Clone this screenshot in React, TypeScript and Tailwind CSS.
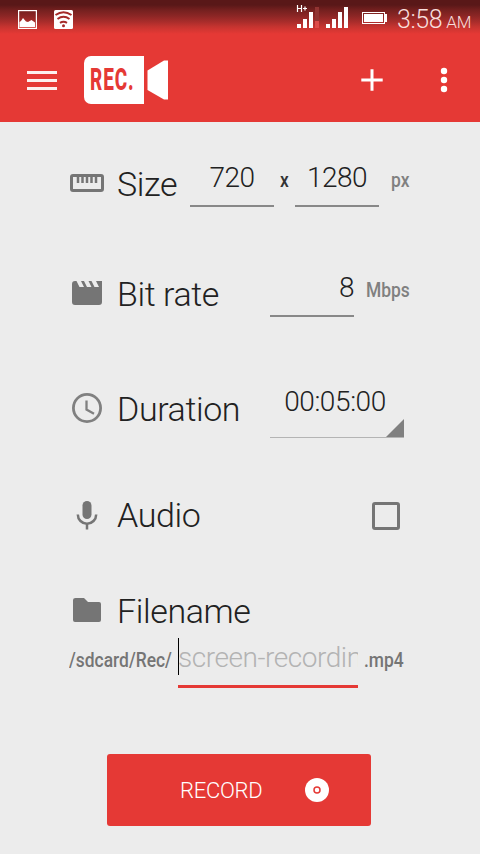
import { ReactNode } from 'react'

function Glyph({ children }: { children: ReactNode }) {
    return (
        <svg className="h-9 w-9 shrink-0" viewBox="0 0 36 36" fill="none">{children}</svg>
    )
}

function Label({ text, className = '' }: { text: string, className?: string }) {
    return <span className={`ml-3 whitespace-nowrap text-[34px] leading-9 font-light tracking-[-0.4px] text-[#212121] ${className}`}>{text}</span>
}

// Roboto squeezed horizontally, used for units and path fragments
function Unit({ text, className = '' }: { text: string, className?: string }) {
    return <span className={`inline-block origin-left scale-x-[0.83] whitespace-nowrap text-[21px] leading-6 font-medium ${className}`}>{text}</span>
}

function Field({ value, className = '' }: { value: string, className?: string }) {
    return (
        <div className={`h-12 w-[84px] border-b-2 border-[#888888] pt-[3px] text-[28px] leading-8 font-light tracking-[-0.5px] text-[#212121] ${className}`}>{value}</div>
    )
}

function StatusBar() {
    return (
        <div className="flex h-[38px] bg-[linear-gradient(180deg,#591818_0px,#591818_5px,#74201f_10px,#8c2625_16px,#aa2d2b_22px,#c73430_27px,#e53935_34px)]">
            <svg className="h-[38px] w-[90px]" viewBox="0 0 90 38">
                <rect x="18.6" y="10.6" width="17.8" height="17.8" fill="none" stroke="#fff" strokeWidth="1.2" />
                <path fill="#fff" d="M19.5 27v-5l1.500-1 2-3 3 3.500 2 .5 3.500-2 3.500 2.500v4.500z" />
                <rect x="54" y="10" width="19" height="19" rx="1.5" fill="#fff" />
                <g fill="none" stroke="#a52b29" strokeWidth="2">
                    <path d="M55.5 15Q63.5 9.500 71.5 15" />
                    <path d="M57.5 19Q63.5 14.500 69.5 19" />
                    <path d="M60 22.8Q63.5 20.500 67 22.800" />
                </g>
                <circle cx="63.5" cy="25.7" r="1.5" fill="#a52b29" />
            </svg>
            <svg className="ml-[200px] h-[38px] w-[105px]" viewBox="290 0 105 38">
                <path fill="none" stroke="#fff" strokeWidth="1.2" d="M297.5 5v7M301.500 5v7M297.500 8.500h4M303 8.500h4M305 6.500v4" />
                <path fill="#fff" d="M297 24h4v4h-4zM303 19h4v9h-4zM309 12h4v16h-4z" />
                <path fill="#913432" d="M315 7h4v14h-4z" />
                <path fill="#dd4c49" d="M315 21h4v7h-4z" />
                <path fill="#fff" d="M326 24h4v4h-4zM332 19h4v9h-4zM338 12h4v16h-4zM344 7h4v21h-4z" />
                <rect x="362.5" y="12.5" width="22" height="11" fill="none" stroke="#fff" />
                <path fill="#fff" d="M364 14h19v8h-19zM385 14h2v8h-2z" />
            </svg>
            <div className="ml-[2px] mt-[6px] flex items-baseline font-light text-[#f7dedd]">
                <span className="text-[25px] leading-7 tracking-[-0.4px]">3:58</span>
                <span className="ml-1 text-[17px] tracking-[-0.2px]">AM</span>
            </div>
        </div>
    )
}

function Toolbar() {
    return (
        <div className="flex h-[84px] items-center">
            <div className="ml-[27px] flex w-[30px] flex-col gap-[5px]">
                <div className="h-[3px] bg-[#fdf0ef]" />
                <div className="h-[3px] bg-[#fdf0ef]" />
                <div className="h-[3px] bg-[#fdf0ef]" />
            </div>
            <div className="ml-[27px] flex h-12 w-[60px] items-center overflow-hidden rounded-l-[7px] bg-white pl-[6px]">
                <span className="origin-left scale-x-[0.61] text-[31px] leading-8 font-extrabold tracking-[1.5px] text-[#e53935]">REC.</span>
            </div>
            <svg className="ml-[3px] h-10 w-[21px]" viewBox="0 0 21 40">
                <path fill="#fff" d="M0.5 10.500L17 0.500h4v39h-4L0.500 30z" />
            </svg>
            <svg className="ml-[192px] h-6 w-6" viewBox="0 0 24 24">
                <path stroke="#fff" strokeWidth="3" d="M12 1.300v21.400M1.300 12h21.400" />
            </svg>
            <svg className="ml-[54px] h-7 w-3" viewBox="0 0 12 28">
                <circle cx="6" cy="5" r="3.2" fill="#fff" />
                <circle cx="6" cy="14" r="3.2" fill="#fff" />
                <circle cx="6" cy="23" r="3.2" fill="#fff" />
            </svg>
        </div>
    )
}

export default function App() {
    return (
        <main className="h-[854px] w-[480px] overflow-hidden bg-[#ececec] font-[Roboto,sans-serif]">
            <header className="h-[122px] bg-[#e53935]">
                <StatusBar />
                <Toolbar />
            </header>

            <div className="flex h-[122px] items-center pl-[69px]">
                <Glyph>
                    <rect x="2.5" y="10.5" width="31" height="15" rx="1.5" stroke="#757575" strokeWidth="3" />
                    <path stroke="#757575" strokeWidth="2.5" d="M9 11v7M13.500 11v7M18 11v7M22.500 11v7M27 11v7" />
                </Glyph>
                <Label text="Size" className="mt-px w-[73px]" />
                <Field value="720" className="text-center" />
                <Unit text="x" className="ml-[6px] -mt-[6px] w-[15px] text-[#333333]" />
                <Field value="1280" className="text-center" />
                <Unit text="px" className="ml-3 -mt-[6px] text-[#808080]" />
            </div>

            <div className="flex h-[98px] items-center pl-[69px]">
                <Glyph>
                    <path fill="#757575" d="M27 6l3 6h-4.500l-3-6h-3l3 6H18l-3-6h-3l3 6h-4.500l-3-6H6a3 3 0 0 0-3 3v18a3 3 0 0 0 3 3h24a3 3 0 0 0 3-3V6z" />
                </Glyph>
                <Label text="Bit rate" className="mt-px w-[153px]" />
                <Field value="8" className="text-right" />
                <Unit text="Mbps" className="ml-3 -mt-[6px] text-[#808080]" />
            </div>

            <div className="flex h-[132px] items-center pl-[69px]">
                <Glyph>
                    <circle cx="18" cy="18" r="13.6" stroke="#808080" strokeWidth="2.8" />
                    <path stroke="#808080" strokeWidth="2.3" d="M17.5 10.500v9l7.500 4.200" />
                </Glyph>
                <Label text="Duration" className="mt-px w-[153px]" />
                <div className="flex h-[60px] w-[134px] flex-col border-b border-[#b4b4b4] text-[28px] leading-8 font-light text-[#212121]">
                    <div className="mt-2 pr-1 text-center tracking-[-0.4px]">00:05:00</div>
                    <svg className="mt-auto h-[18px] w-[18px] self-end" viewBox="0 0 18 18">
                        <path fill="#808080" d="M18 0v18H0z" />
                    </svg>
                </div>
            </div>

            <div className="flex h-[84px] items-center pl-[69px]">
                <Glyph>
                    <rect x="13.5" y="3" width="9" height="18" rx="4.5" fill="#757575" />
                    <path stroke="#757575" strokeWidth="2.5" d="M8.8 16.500a9.200 9.200 0 0 0 18.400 0M18 25.500v6" />
                </Glyph>
                <Label text="Audio" className="-mt-[3px] w-[255px]" />
                <div className="h-7 w-7 rounded-[3px] border-3 border-[#757575]" />
            </div>

            <div className="flex h-[80px] items-start pt-[34px] pl-[69px]">
                <Glyph>
                    <path fill="#757575" d="M6.5 6H15l4 4h11q2 0 2 2v16q0 2-2 2H6q-2 0-2-2V8q0-2 2.500-2z" />
                </Glyph>
                <Label text="Filename" className="mt-px" />
            </div>
            <div className="-mt-[10px] flex h-[60px] items-start pl-[69px]">
                <Unit text="/sdcard/Rec/" className="mt-5 w-[109px] text-[#757575]" />
                <div className="flex h-[60px] w-[180px] items-start border-b-3 border-[#e53935]">
                    <div className="mt-[10px] h-[37px] w-px shrink-0 bg-black" />
                    <span className="-ml-px mt-[14px] w-[180px] overflow-hidden text-[28px] leading-8 font-light tracking-[-0.45px] whitespace-nowrap text-[#b3b3b3]">screen-recording</span>
                </div>
                <Unit text=".mp4" className="ml-[6px] mt-5 text-[#757575]" />
            </div>

            <button className="mt-[66px] ml-[107px] flex h-[72px] w-[264px] items-center rounded-[3px] bg-[#e53935] pl-[73px] text-white">
                <span className="mt-[2px] w-[125px] text-left text-[22px] leading-6 font-light tracking-[-0.3px]">RECORD</span>
                <svg className="h-6 w-6" viewBox="0 0 24 24">
                    <circle cx="12" cy="12" r="12" fill="#fff" />
                    <circle cx="12" cy="12" r="3" fill="none" stroke="#e53935" strokeWidth="1.5" />
                </svg>
            </button>
        </main>
    )
}
